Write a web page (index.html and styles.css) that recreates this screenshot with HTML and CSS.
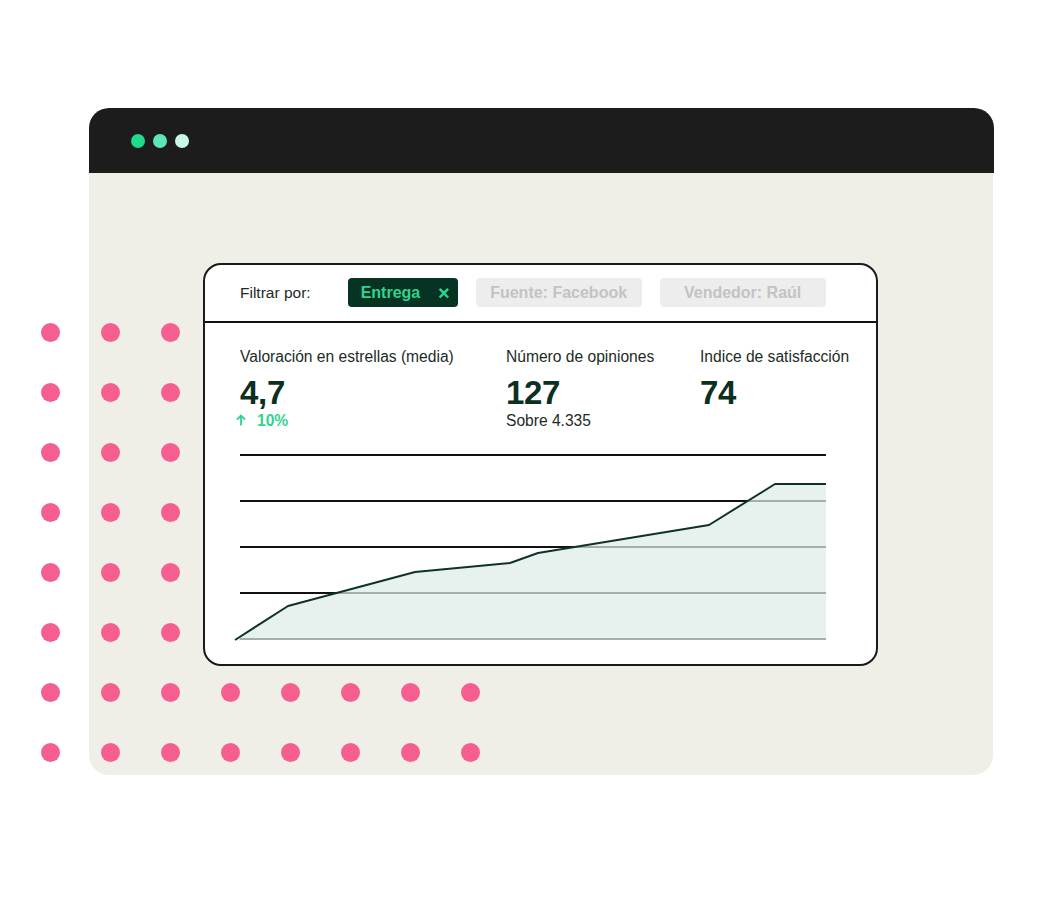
FILE: index.html
```html
<!DOCTYPE html>
<html lang="es">
<head>
<meta charset="utf-8">
<title>Dashboard</title>
<link rel="stylesheet" href="styles.css">
</head>
<body>
<div class="stage">
  <div class="window">
    <div class="titlebar">
      <span class="tdot d1"></span>
      <span class="tdot d2"></span>
      <span class="tdot d3"></span>
    </div>
    <div class="winbody">
      <div class="card">
        <div class="filters">
          <span class="filter-label">Filtrar por:</span>
          <span class="chip chip-active">Entrega <span class="chip-x">×</span></span>
          <span class="chip chip-off">Fuente: Facebook</span>
          <span class="chip chip-off">Vendedor: Raúl</span>
        </div>
        <div class="stats">
          <div class="stat s1">
            <div class="stat-label">Valoración en estrellas (media)</div>
            <div class="stat-num">4,7</div>
            <div class="stat-sub up"><svg class="arrow" width="12" height="12" viewBox="0 0 12 12"><path d="M6 11.5V1.5M2 5.5L6 1.5L10 5.5" fill="none" stroke="#2fd48f" stroke-width="1.8"/></svg>10%</div>
          </div>
          <div class="stat s2">
            <div class="stat-label">Número de opiniones</div>
            <div class="stat-num">127</div>
            <div class="stat-sub">Sobre 4.335</div>
          </div>
          <div class="stat s3">
            <div class="stat-label">Indice de satisfacción</div>
            <div class="stat-num">74</div>
          </div>
        </div>
        <svg class="chart" width="600" height="200" viewBox="0 0 600 200">
          <g stroke="#111" stroke-width="2">
            <line x1="10" y1="10" x2="596" y2="10"/>
            <line x1="10" y1="56" x2="596" y2="56"/>
            <line x1="10" y1="102" x2="596" y2="102"/>
            <line x1="10" y1="148" x2="596" y2="148"/>
            <line x1="10" y1="194" x2="596" y2="194"/>
          </g>
          <polygon points="5,195 58,161 185,127 280,118 308,108 479,80 545,39 596,39 596,195" fill="rgba(222,237,232,0.72)"/>
          <polyline points="5,195 58,161 185,127 280,118 308,108 479,80 545,39 596,39" fill="none" stroke="#0d3326" stroke-width="2" stroke-linejoin="round"/>
        </svg>
      </div>
    </div>
  </div>
  <div class="dots">
    <span></span><span></span><span></span><span class="e"></span><span class="e"></span><span class="e"></span><span class="e"></span><span class="e"></span>
    <span></span><span></span><span></span><span class="e"></span><span class="e"></span><span class="e"></span><span class="e"></span><span class="e"></span>
    <span></span><span></span><span></span><span class="e"></span><span class="e"></span><span class="e"></span><span class="e"></span><span class="e"></span>
    <span></span><span></span><span></span><span class="e"></span><span class="e"></span><span class="e"></span><span class="e"></span><span class="e"></span>
    <span></span><span></span><span></span><span class="e"></span><span class="e"></span><span class="e"></span><span class="e"></span><span class="e"></span>
    <span></span><span></span><span></span><span class="e"></span><span class="e"></span><span class="e"></span><span class="e"></span><span class="e"></span>
    <span></span><span></span><span></span><span></span><span></span><span></span><span></span><span></span>
    <span></span><span></span><span></span><span></span><span></span><span></span><span></span><span></span>
  </div>
</div>
</body>
</html>
```

FILE: styles.css
```css
html, body {
  margin: 0;
  padding: 0;
  background: #ffffff;
  font-family: "Liberation Sans", Arial, sans-serif;
}

.stage {
  position: relative;
  width: 1050px;
  height: 900px;
  padding-top: 108px;
  padding-left: 89px;
  box-sizing: border-box;
}

.window {
  width: 905px;
  display: flex;
  flex-direction: column;
}

.titlebar {
  height: 65px;
  background: #1c1c1c;
  border-radius: 20px 20px 0 0;
  display: flex;
  align-items: center;
  gap: 8px;
  padding-left: 42px;
  box-sizing: border-box;
}

.tdot {
  width: 14px;
  height: 14px;
  border-radius: 50%;
}
.d1 { background: #1fd98c; }
.d2 { background: #5ee6b8; }
.d3 { background: #c9f6e5; }

.winbody {
  height: 602px;
  width: 904px;
  background: #f0efe7;
  border-radius: 0 0 20px 20px;
  padding-top: 90px;
  padding-left: 114px;
  box-sizing: border-box;
}

.card {
  width: 675px;
  height: 403px;
  box-sizing: border-box;
  background: #ffffff;
  border: 2px solid #1a1a1a;
  border-radius: 18px;
  display: flex;
  flex-direction: column;
}

.filters {
  border-bottom: 2px solid #111;
  display: flex;
  align-items: center;
  padding-left: 35px;
  padding-bottom: 1px;
  box-sizing: border-box;
  height: 58px;
}

.filter-label {
  font-size: 15.5px;
  color: #1c2b25;
  margin-right: 37px;
}

.chip {
  height: 29px;
  border-radius: 4px;
  display: flex;
  align-items: center;
  font-size: 16px;
  font-weight: bold;
  box-sizing: border-box;
}

.chip-active {
  width: 110px;
  background: #073322;
  color: #2fd48f;
  padding-left: 13px;
  margin-right: 18px;
}

.chip-x {
  margin-left: auto;
  margin-right: 8px;
  font-size: 20px;
  line-height: 1;
}

.chip-off {
  width: 166px;
  justify-content: center;
  background: #ededed;
  color: #c3c3c3;
  margin-right: 18px;
}

.stats {
  display: flex;
  padding-left: 35px;
  padding-top: 25px;
  height: 110px;
  box-sizing: border-box;
}

.s1 { width: 266px; }
.s2 { width: 194px; }
.s3 { width: 170px; }

.stat-label {
  font-size: 15.6px;
  line-height: 18px;
  color: #1c2b25;
  white-space: nowrap;
}

.stat-num {
  margin-top: 9px;
  font-size: 33px;
  line-height: 36px;
  font-weight: bold;
  color: #0b3022;
  letter-spacing: -0.3px;
}

.stat-sub {
  font-size: 15.6px;
  line-height: 18px;
  color: #1c2b25;
  margin-top: 1px;
}

.stat-sub.up {
  color: #2fd48f;
  font-weight: bold;
  display: flex;
  align-items: center;
  margin-left: -5px;
}

.arrow {
  margin-right: 10px;
  margin-top: -2px;
}

.chart {
  display: block;
  margin-left: 25px;
  margin-top: 12px;
}

.dots {
  position: absolute;
  left: 41px;
  top: 323px;
  display: grid;
  grid-template-columns: repeat(8, 20px);
  grid-auto-rows: 20px;
  column-gap: 40px;
  row-gap: 40px;
}

.dots span {
  width: 19px;
  height: 19px;
  border-radius: 50%;
  background: #f75e90;
}

.dots span.e {
  background: transparent;
}
```
